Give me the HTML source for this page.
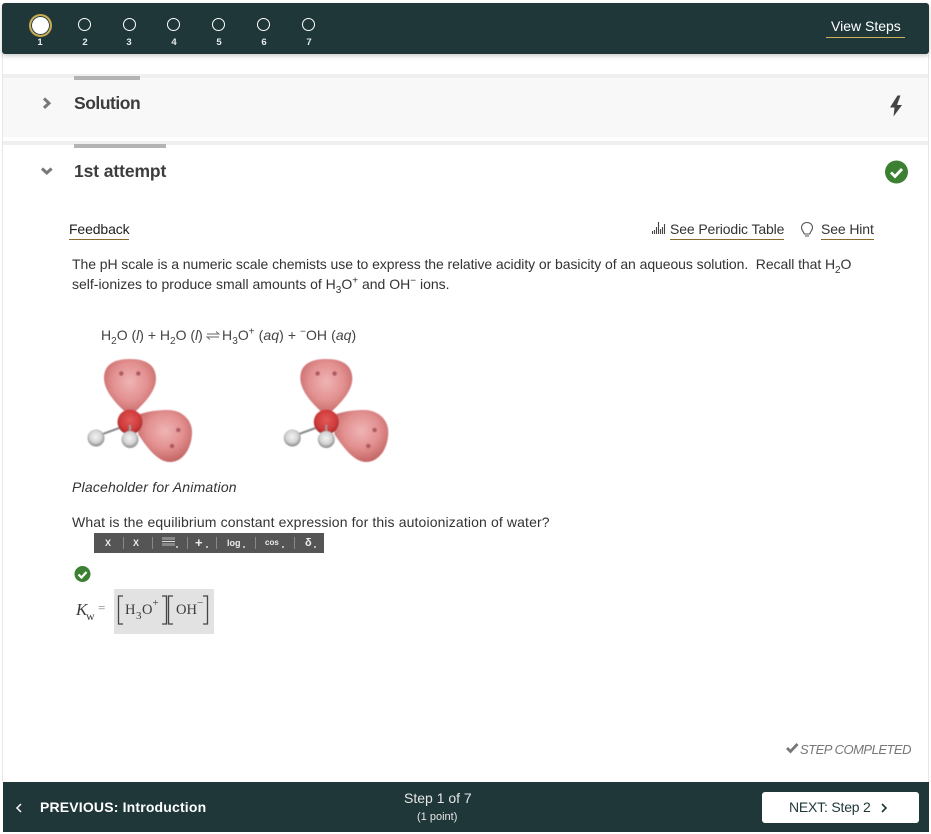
<!DOCTYPE html>
<html><head><meta charset="utf-8">
<style>
html,body{margin:0;padding:0;background:#fff;}
body{width:931px;height:834px;position:relative;overflow:hidden;font-family:"Liberation Sans",sans-serif;color:#333;}
.a{position:absolute;white-space:nowrap;}
.b{position:absolute;}
.t{font-size:14px;letter-spacing:-.12px;color:#333;line-height:20px;}
sub,sup{font-size:10px;line-height:0;}
.c{position:absolute;width:11px;height:11px;border:1.5px solid #fff;border-radius:50%;top:18px;}
.n{position:absolute;top:38px;width:20px;text-align:center;font-size:9.5px;font-weight:bold;color:#e8ecec;line-height:10px;}
.tb{position:absolute;color:#eee;font-weight:bold;font-size:9px;line-height:20px;top:533px;}
.sep{position:absolute;top:537px;width:1px;height:12px;background:#888;}
.dot{position:absolute;top:546px;width:2px;height:2px;background:#bbb;}
.m{position:absolute;white-space:nowrap;font-family:"Liberation Serif",serif;color:#3c3c3c;line-height:20px;}
</style></head><body>
<div class="b" style="left:2px;top:54px;width:927px;height:728px;box-sizing:border-box;border-left:1px solid #e6e6e6;border-right:1px solid #e6e6e6;"></div>
<div class="b" style="left:2px;top:3px;width:927px;height:51px;background:#1f3739;border-radius:3px;box-shadow:0 2px 5px rgba(0,0,0,.2);"></div>
<div class="b" style="left:28.5px;top:13.5px;width:19px;height:19px;background:#fff;border:2px solid #c9ab4f;border-radius:50%;box-shadow:inset 0 0 0 1px #1f3739;"></div>
<div class="c" style="left:78px"></div><div class="c" style="left:123px"></div><div class="c" style="left:167px"></div><div class="c" style="left:212px"></div><div class="c" style="left:257px"></div><div class="c" style="left:302px"></div>
<div class="n" style="left:30px">1</div><div class="n" style="left:75px">2</div><div class="n" style="left:119px">3</div><div class="n" style="left:164px">4</div><div class="n" style="left:209px">5</div><div class="n" style="left:254px">6</div><div class="n" style="left:299px">7</div>
<div class="a" style="left:831px;top:17px;font-size:14px;color:#fff;line-height:18px;">View Steps</div>
<div class="b" style="left:826px;top:37px;width:79px;height:1px;background:#cdb25c;"></div>

<div class="b" style="left:3px;top:74px;width:925px;height:4px;background:#efefef;"></div>
<div class="b" style="left:3px;top:78px;width:925px;height:59px;background:#f8f8f8;"></div>
<div class="b" style="left:74px;top:76px;width:66px;height:4px;background:#b3b3b3;"></div>
<div class="b" style="left:3px;top:141px;width:925px;height:4px;background:#efefef;"></div>
<div class="b" style="left:74px;top:144px;width:92px;height:4px;background:#b3b3b3;"></div>
<div class="b" style="left:94px;top:533px;width:230px;height:20px;background:#555;"></div>
<div class="b" style="left:114px;top:589px;width:100px;height:45px;background:#e2e2e2;"></div>
<div class="b" style="left:3px;top:782px;width:926px;height:50px;background:#1f3739;"></div>
<div class="b" style="left:762px;top:792px;width:157px;height:31px;background:#fff;border-radius:3px;"></div>
<svg class="b" style="left:0;top:0" width="931" height="834">
<defs>
<filter id="bl" x="-10%" y="-10%" width="120%" height="120%"><feGaussianBlur stdDeviation=".5"/></filter>
<radialGradient id="l1" cx=".5" cy=".4" r=".62"><stop offset="0" stop-color="#efb4b4"/><stop offset=".55" stop-color="#e28f8f"/><stop offset="1" stop-color="#c26262"/></radialGradient>
<radialGradient id="o" cx=".5" cy=".42" r=".58"><stop offset="0" stop-color="#e25a5a"/><stop offset=".7" stop-color="#cf3a3a"/><stop offset="1" stop-color="#a12828"/></radialGradient>
<radialGradient id="h" cx=".48" cy=".42" r=".58"><stop offset="0" stop-color="#f2f2f2"/><stop offset=".6" stop-color="#d4d4d4"/><stop offset="1" stop-color="#858585"/></radialGradient>
<g id="mol" filter="url(#bl)">
<path d="M130 416C118 406 104 392 104 378C104 364 115 359 130 359C146 359 156 365 156 379C156 392 142 406 130 416Z" fill="url(#l1)"/>
<path d="M140 414C150 411 158 410 168 410C182 410 192 420 192 432C192 448 183 462 170 462C157 462 146 446 138 434Z" fill="url(#l1)"/>
<circle cx="121.3" cy="373.5" r="2.3" fill="#b05a62"/><circle cx="138.3" cy="373.5" r="2.3" fill="#b05a62"/><circle cx="178.3" cy="430" r="2.3" fill="#b05a62"/><circle cx="172" cy="446" r="2.3" fill="#b05a62"/>
<line x1="100" y1="435" x2="122" y2="427" stroke="#8a8a8a" stroke-width="2"/>
<circle cx="130" cy="422" r="12.5" fill="url(#o)"/>
<line x1="130" y1="425" x2="130" y2="434" stroke="#999" stroke-width="2"/>
<circle cx="96" cy="438" r="8.500" fill="url(#h)"/>
<circle cx="130" cy="439.5" r="8.500" fill="url(#h)"/>
</g>
</defs>
<path d="M44 98.500l5 4.700-5 4.700" fill="none" stroke="#777" stroke-width="3"/>
<path d="M42 168.500l4.800 4.500 4.800-4.500" fill="none" stroke="#777" stroke-width="3"/>
<path d="M897.500 95.500L890 107.500H894.500L893.500 116.500L902 105H897L900.500 95.500Z" fill="#444"/>
<circle cx="896.500" cy="172" r="11.500" fill="#3c8131"/>
<path d="M891 172.500l4 4 7-7.500" fill="none" stroke="#fff" stroke-width="2.800"/>
<circle cx="82.500" cy="574" r="8" fill="#3c8131"/>
<path d="M78.500 574.500l3 3 5-5.500" fill="none" stroke="#fff" stroke-width="2.200"/>
<path d="M652.500 234v-3M654.500 234v-4M656.500 234v-7M658.500 234v-12M660.500 234v-5M662.500 234v-7M664.500 234v-10" stroke="#444" stroke-width="1.100" fill="none"/>
<path d="M807 222.500c-3.200 0-5.500 2.300-5.500 5.200 0 2.500 2.300 4 2.800 6.300h5.400c.5-2.300 2.800-3.800 2.800-6.300 0-2.900-2.300-5.200-5.500-5.200zM805 236h4" fill="none" stroke="#555" stroke-width="1.100"/>
<use href="#mol"/><use href="#mol" x="196.300"/>
<path d="M787 748l3.500 3.500 7-7.500" fill="none" stroke="#777" stroke-width="2.800"/>
<path d="M21 804l-4 4 4 4" fill="none" stroke="#fff" stroke-width="1.500"/>
<path d="M882 804l4 4-4 4" fill="none" stroke="#1f3739" stroke-width="1.600"/>
<path d="M207 334h12l-3-2.500M219 337h-12l3 2.500" fill="none" stroke="#666" stroke-width=".9"/>
<g fill="none" stroke="#444" stroke-width="1.300">
<path d="M123 596h-4.500v28h4.500M162 596h4.500v28h-4.500M173 596h-4.500v28h4.500M203 596h4.500v28h-4.500"/>
</g>
</svg>
<div class="a" style="left:74px;top:92px;font-size:17.500px;font-weight:bold;color:#3d3d3d;line-height:22px;letter-spacing:-.47px;">Solution</div>
<div class="a" style="left:74px;top:160px;font-size:17.500px;font-weight:bold;color:#3d3d3d;line-height:22px;letter-spacing:-.1px;">1st attempt</div>
<div class="a t" style="left:69px;top:219px;color:#222;">Feedback</div>
<div class="b" style="left:69px;top:239px;width:60px;height:1px;background:#8a6a2a;"></div>
<div class="a t" style="left:670px;top:219px;">See Periodic Table</div>
<div class="b" style="left:670px;top:239px;width:114px;height:1px;background:#8a6a2a;"></div>
<div class="a t" style="left:821px;top:219px;">See Hint</div>
<div class="b" style="left:821px;top:239px;width:53px;height:1px;background:#8a6a2a;"></div>
<div class="a t" style="left:72px;top:254px;letter-spacing:-.07px;">The pH scale is a numeric scale chemists use to express the relative acidity or basicity of an aqueous solution.&nbsp; Recall that H<sub>2</sub>O</div>
<div class="a t" style="left:72px;top:274px;letter-spacing:0;">self-ionizes to produce small amounts of H<sub>3</sub>O<sup>+</sup> and OH<sup>−</sup> ions.</div>
<div class="a" style="left:101px;top:325px;font-size:14px;line-height:20px;color:#444;">H<sub>2</sub>O (<i>l</i>) + H<sub>2</sub>O (<i>l</i>)</div>
<div class="a" style="left:222px;top:325px;font-size:14px;line-height:20px;color:#444;letter-spacing:.07px;">H<sub>3</sub>O<sup>+</sup> (<i>aq</i>) + <sup>−</sup>OH (<i>aq</i>)</div>
<div class="a t" style="left:72px;top:477px;font-style:italic;letter-spacing:.2px;">Placeholder for Animation</div>
<div class="a t" style="left:72px;top:512px;letter-spacing:.13px;">What is the equilibrium constant expression for this autoionization of water?</div>
<div class="tb" style="left:105px">X</div><div class="sep" style="left:123px"></div>
<div class="tb" style="left:133px">X</div><div class="sep" style="left:152px"></div>
<div class="b" style="left:162px;top:537px;width:13px;height:3px;background:#888;"></div><div class="b" style="left:162px;top:541px;width:13px;height:1px;background:#ddd;"></div><div class="b" style="left:162px;top:543px;width:13px;height:3px;background:#888;"></div><div class="dot" style="left:176px"></div><div class="sep" style="left:187px"></div>
<div class="tb" style="left:195px;font-size:13px;">+</div><div class="dot" style="left:206px"></div><div class="sep" style="left:216px"></div>
<div class="tb" style="left:227px">log</div><div class="dot" style="left:243px"></div><div class="sep" style="left:255px"></div>
<div class="tb" style="left:265px;font-size:8px">cos</div><div class="dot" style="left:282px"></div><div class="sep" style="left:294px"></div>
<div class="tb" style="left:305px;font-size:11px">δ</div><div class="dot" style="left:314px"></div>
<div class="m" style="left:76px;top:600px;font-size:17px;"><i>K</i></div>
<div class="m" style="left:86px;top:606px;font-size:12px;">w</div>
<div class="m" style="left:98px;top:598px;font-size:13px;color:#777;">=</div>
<div class="m" style="left:125px;top:600px;font-size:14.500px;">H</div>
<div class="m" style="left:136px;top:606px;font-size:11px;">3</div>
<div class="m" style="left:142px;top:600px;font-size:14.500px;">O</div>
<div class="m" style="left:152.500px;top:593px;font-size:11px;">+</div>
<div class="m" style="left:176px;top:600px;font-size:14.500px;">OH</div>
<div class="m" style="left:197px;top:593px;font-size:11px;">−</div>
<div class="a" style="left:800px;top:741px;font-size:13px;font-style:italic;color:#777;line-height:18px;letter-spacing:-.5px;">STEP COMPLETED</div>
<div class="a" style="left:40px;top:797px;font-size:14px;font-weight:bold;color:#fff;line-height:20px;letter-spacing:.17px;">PREVIOUS: Introduction</div>
<div class="a" style="left:404px;top:789px;font-size:14px;color:#e6e6e6;line-height:18px;">Step 1 of 7</div>
<div class="a" style="left:417px;top:810px;font-size:11px;color:#e6e6e6;line-height:14px;">(1 point)</div>
<div class="a" style="left:789px;top:798px;font-size:14px;color:#1f3739;line-height:18px;letter-spacing:-.2px;">NEXT: Step 2</div>
</body></html>
